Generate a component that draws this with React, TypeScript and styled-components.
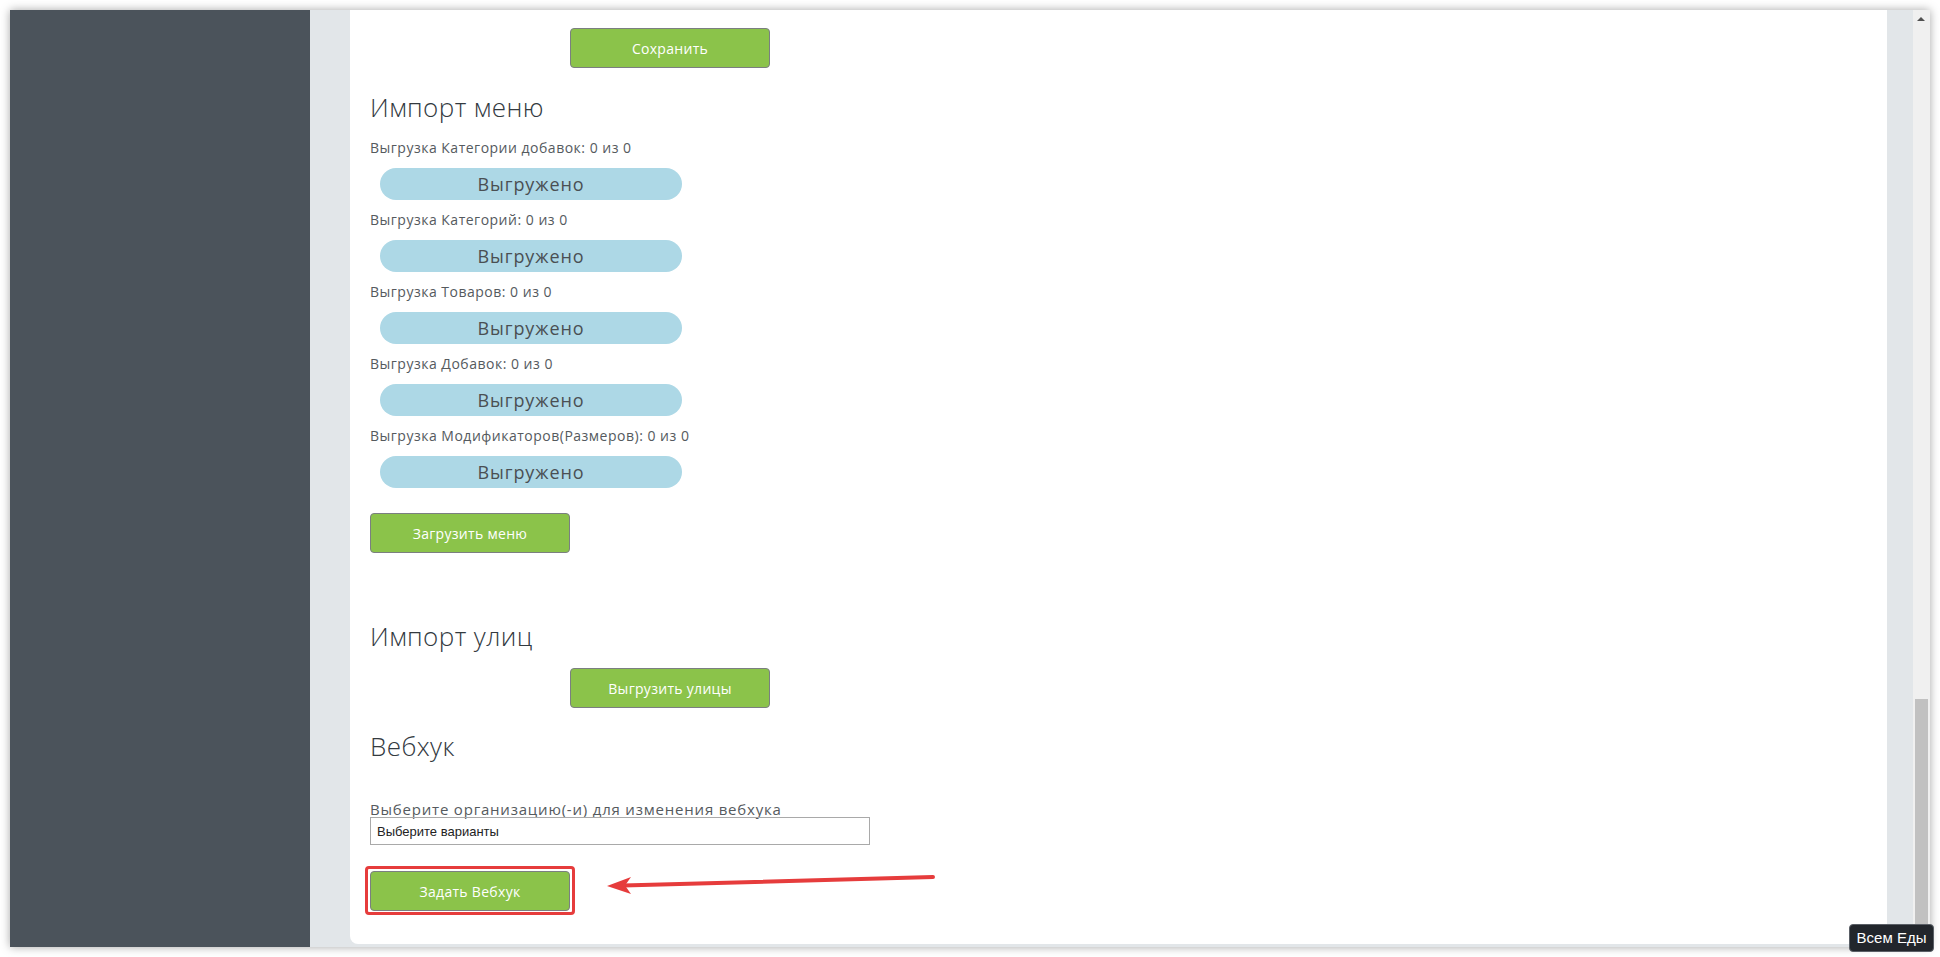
import React from "react";
import styled, { createGlobalStyle } from "styled-components";

const Global = createGlobalStyle`
  html, body { margin: 0; padding: 0; background: #ffffff; }
  body { font-family: "Open Sans", "Noto Sans", sans-serif; }
  * { box-sizing: border-box; }
`;

const Page = styled.div`
  position: relative;
  width: 1940px;
  height: 957px;
  padding: 10px 0 0 10px;
  overflow: hidden;
`;

const Window = styled.div`
  display: flex;
  width: 1920px;
  height: 937px;
  overflow: hidden;
  box-shadow: 0 0 9px rgba(0, 0, 0, 0.35);
`;

const Sidebar = styled.aside`
  width: 300px;
  flex: none;
  background: #4b535b;
`;

const Main = styled.main`
  flex: 1;
  display: flex;
  flex-direction: column;
  background: #e2e6e9;
  padding: 0 26px 3px 40px;
`;

const Card = styled.section`
  flex: 1;
  display: flex;
  flex-direction: column;
  align-items: flex-start;
  background: #ffffff;
  border-radius: 0 0 8px 8px;
  padding: 18px 20px 31px;
`;

const OffsetRow = styled.div<{ $mt?: number }>`
  padding-left: 200px;
  margin-top: ${(p) => p.$mt ?? 0}px;
`;

const Button = styled.button<{ $mt?: number }>`
  width: 200px;
  height: 40px;
  margin-top: ${(p) => p.$mt ?? 0}px;
  background: #8bc34a;
  border: 1px solid #7b7f80;
  border-radius: 4px;
  color: #ffffff;
  font-family: "Open Sans", "Noto Sans", sans-serif;
  font-size: 14px;
  letter-spacing: 0.3px;
  cursor: pointer;
  padding: 0;
`;

const Heading = styled.h2<{ $mt: number }>`
  margin: ${(p) => p.$mt}px 0 0;
  font-family: "Open Sans", "Noto Sans", sans-serif;
  font-weight: 300;
  font-size: 26px;
  line-height: 30px;
  color: #333a3f;
  letter-spacing: 0.4px;
`;

const Label = styled.div<{ $mt: number; $lh?: number; $fs?: number; $ls?: number }>`
  margin-top: ${(p) => p.$mt}px;
  font-size: ${(p) => p.$fs ?? 14}px;
  line-height: ${(p) => p.$lh ?? 20}px;
  color: #555a5e;
  letter-spacing: ${(p) => p.$ls ?? 0.5}px;
`;

const Pill = styled.div`
  margin: 10px 0 0 10px;
  width: 302px;
  height: 32px;
  border-radius: 16px;
  background: #add8e6;
  color: #4a4f53;
  font-size: 18px;
  line-height: 32px;
  text-align: center;
  letter-spacing: 0.9px;
`;

const Select = styled.div`
  width: 500px;
  height: 28px;
  border: 1px solid #a9a9a9;
  padding: 0 6px;
  display: flex;
  align-items: center;
  font-family: "Liberation Sans", Arial, sans-serif;
  font-size: 13px;
  color: #222;
`;

const ActionRow = styled.div`
  position: relative;
  margin-top: 26px;
`;

const Highlighted = styled.div`
  position: relative;
  &::after {
    content: "";
    position: absolute;
    left: -5px;
    top: -5px;
    right: -5px;
    bottom: -4px;
    border: 3px solid #e63c3c;
    border-radius: 4px;
    pointer-events: none;
  }
`;

const Arrow = styled.svg`
  position: absolute;
  left: 235px;
  top: 0;
  overflow: visible;
`;

const Scrollbar = styled.div`
  width: 17px;
  flex: none;
  background: #f0f0f0;
  position: relative;
`;

const ScrollUp = styled.div`
  position: absolute;
  left: 4px;
  top: 7px;
  width: 0;
  height: 0;
  border-left: 4px solid transparent;
  border-right: 4px solid transparent;
  border-bottom: 4px solid #505050;
`;

const Thumb = styled.div`
  position: absolute;
  left: 2px;
  top: 689px;
  width: 13px;
  height: 235px;
  background: #c1c1c1;
`;

const Tooltip = styled.div`
  position: absolute;
  left: 1849px;
  top: 924px;
  width: 85px;
  height: 28px;
  background: #22262c;
  border: 1px solid #5a5f66;
  border-radius: 4px;
  color: #ffffff;
  font-family: "Liberation Sans", Arial, sans-serif;
  font-size: 15px;
  line-height: 26px;
  text-align: center;
`;

const items = [
  "Выгрузка Категории добавок: 0 из 0",
  "Выгрузка Категорий: 0 из 0",
  "Выгрузка Товаров: 0 из 0",
  "Выгрузка Добавок: 0 из 0",
  "Выгрузка Модификаторов(Размеров): 0 из 0",
];

export default function App() {
  return (
    <Page>
      <Global />
      <Window>
        <Sidebar />
        <Main>
          <Card>
            <OffsetRow>
              <Button>Сохранить</Button>
            </OffsetRow>
            <Heading $mt={24}>Импорт меню</Heading>
            {items.map((t, i) => (
              <React.Fragment key={t}>
                <Label $mt={i === 0 ? 16 : 10}>{t}</Label>
                <Pill>Выгружено</Pill>
              </React.Fragment>
            ))}
            <Button $mt={25}>Загрузить меню</Button>
            <Heading $mt={68}>Импорт улиц</Heading>
            <OffsetRow $mt={17}>
              <Button>Выгрузить улицы</Button>
            </OffsetRow>
            <Heading $mt={23}>Вебхук</Heading>
            <Label $mt={40} $lh={16} $fs={15} $ls={0.8}>
              Выберите организацию(-и) для изменения вебхука
            </Label>
            <Select>Выберите варианты</Select>
            <ActionRow>
              <Highlighted>
                <Button>Задать Вебхук</Button>
              </Highlighted>
              <Arrow width="330" height="26" viewBox="0 0 330 26">
                <line x1="328" y1="6" x2="18" y2="14.5" stroke="#e63c3c" strokeWidth="4" strokeLinecap="round" />
                <polygon points="2,15 26,6 20,14.6 26,23" fill="#e63c3c" />
              </Arrow>
            </ActionRow>
          </Card>
        </Main>
        <Scrollbar>
          <ScrollUp />
          <Thumb />
        </Scrollbar>
      </Window>
      <Tooltip>Всем Еды</Tooltip>
    </Page>
  );
}
